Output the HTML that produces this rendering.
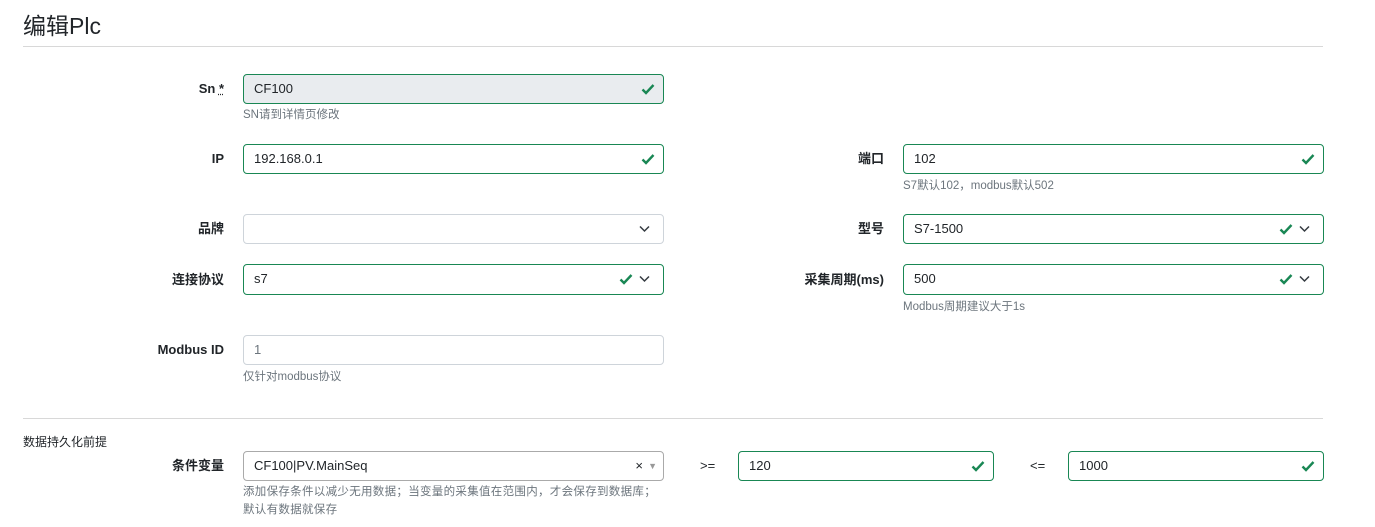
<!DOCTYPE html><html><head><meta charset="utf-8"><style>
body{margin:0;width:1375px;height:527px;background:#fff;font-family:"Liberation Sans","Noto Sans CJK SC",sans-serif;color:#212529;position:relative;overflow:hidden}
.a{position:absolute}
.t{font-size:23px;left:23px;top:7px}
.hr{left:23px;width:1300px;height:1px;background:#d8d8d8}
.l{font-size:13px;font-weight:bold;text-align:right;width:200px;line-height:30px}
.i{height:28px;border:1px solid #198754;border-radius:4px;font-size:13px;line-height:28px;padding-left:10px;box-sizing:content-box}
.g{border-color:#ced4da}
.h{font-size:11.5px;color:#6c757d}
.ck{position:absolute;top:7px}
.cv{position:absolute;top:10px}
</style></head><body>
<div class="a t">编辑Plc</div>
<div class="a hr" style="top:46px"></div>
<div class="a l" style="left:24px;top:74px">Sn <span style="text-decoration:underline dotted">*</span></div>
<div class="a i" style="left:243px;top:74px;width:409px;background:#e9ecef">CF100<svg class="ck" style="right:8px" width="14" height="14" viewBox="0 0 14 14"><path d="M1.5 7.5 5 11 12.5 3" fill="none" stroke="#198754" stroke-width="2.4"/></svg></div>
<div class="a h" style="left:243px;top:106px">SN请到详情页修改</div>

<div class="a l" style="left:24px;top:144px">IP</div>
<div class="a i" style="left:243px;top:144px;width:409px">192.168.0.1<svg class="ck" style="right:8px" width="14" height="14" viewBox="0 0 14 14"><path d="M1.5 7.5 5 11 12.5 3" fill="none" stroke="#198754" stroke-width="2.4"/></svg></div>
<div class="a l" style="left:684px;top:144px">端口</div>
<div class="a i" style="left:903px;top:144px;width:409px">102<svg class="ck" style="right:8px" width="14" height="14" viewBox="0 0 14 14"><path d="M1.5 7.5 5 11 12.5 3" fill="none" stroke="#198754" stroke-width="2.4"/></svg></div>
<div class="a h" style="left:903px;top:177px">S7默认102，modbus默认502</div>

<div class="a l" style="left:24px;top:214px">品牌</div>
<div class="a i g" style="left:243px;top:214px;width:409px"><svg class="cv" style="right:13px" width="11" height="8" viewBox="0 0 11 8"><path d="M1 1.5 5.5 6 10 1.5" fill="none" stroke="#343a40" stroke-width="1.5"/></svg></div>
<div class="a l" style="left:684px;top:214px">型号</div>
<div class="a i" style="left:903px;top:214px;width:409px">S7-1500<svg class="ck" style="right:30px" width="14" height="14" viewBox="0 0 14 14"><path d="M1.5 7.5 5 11 12.5 3" fill="none" stroke="#198754" stroke-width="2.4"/></svg><svg class="cv" style="right:13px" width="11" height="8" viewBox="0 0 11 8"><path d="M1 1.5 5.5 6 10 1.5" fill="none" stroke="#343a40" stroke-width="1.5"/></svg></div>

<div class="a l" style="left:24px;top:265px">连接协议</div>
<div class="a i" style="left:243px;top:264px;width:409px;height:29px">s7<svg class="ck" style="right:30px" width="14" height="14" viewBox="0 0 14 14"><path d="M1.5 7.5 5 11 12.5 3" fill="none" stroke="#198754" stroke-width="2.4"/></svg><svg class="cv" style="right:13px" width="11" height="8" viewBox="0 0 11 8"><path d="M1 1.5 5.5 6 10 1.5" fill="none" stroke="#343a40" stroke-width="1.5"/></svg></div>
<div class="a l" style="left:684px;top:265px">采集周期(ms)</div>
<div class="a i" style="left:903px;top:264px;width:409px;height:29px">500<svg class="ck" style="right:30px" width="14" height="14" viewBox="0 0 14 14"><path d="M1.5 7.5 5 11 12.5 3" fill="none" stroke="#198754" stroke-width="2.4"/></svg><svg class="cv" style="right:13px" width="11" height="8" viewBox="0 0 11 8"><path d="M1 1.5 5.5 6 10 1.5" fill="none" stroke="#343a40" stroke-width="1.5"/></svg></div>
<div class="a h" style="left:903px;top:298px">Modbus周期建议大于1s</div>

<div class="a l" style="left:24px;top:335px">Modbus ID</div>
<div class="a i g" style="left:243px;top:335px;width:409px;color:#6c757d">1</div>
<div class="a h" style="left:243px;top:368px">仅针对modbus协议</div>

<div class="a hr" style="top:418px"></div>
<div class="a" style="left:23px;top:433px;font-size:12px">数据持久化前提</div>
<div class="a l" style="left:24px;top:451px">条件变量</div>
<div class="a i" style="left:243px;top:451px;width:409px;border-color:#aaa;height:28px">CF100|PV.MainSeq<span style="position:absolute;right:20px;top:0;font-size:13px">×</span><span style="position:absolute;right:6px;top:0;font-size:9px;color:#999">▼</span></div>
<div class="a h" style="left:243px;top:483px;line-height:18px;letter-spacing:0.3px">添加保存条件以减少无用数据；当变量的采集值在范围内，才会保存到数据库；<br>默认有数据就保存</div>
<div class="a" style="left:700px;top:458px;font-size:13px">&gt;=</div>
<div class="a i" style="left:738px;top:451px;width:244px">120<svg class="ck" style="right:8px" width="14" height="14" viewBox="0 0 14 14"><path d="M1.5 7.5 5 11 12.5 3" fill="none" stroke="#198754" stroke-width="2.4"/></svg></div>
<div class="a" style="left:1030px;top:458px;font-size:13px">&lt;=</div>
<div class="a i" style="left:1068px;top:451px;width:244px">1000<svg class="ck" style="right:8px" width="14" height="14" viewBox="0 0 14 14"><path d="M1.5 7.5 5 11 12.5 3" fill="none" stroke="#198754" stroke-width="2.4"/></svg></div>
</body></html>
